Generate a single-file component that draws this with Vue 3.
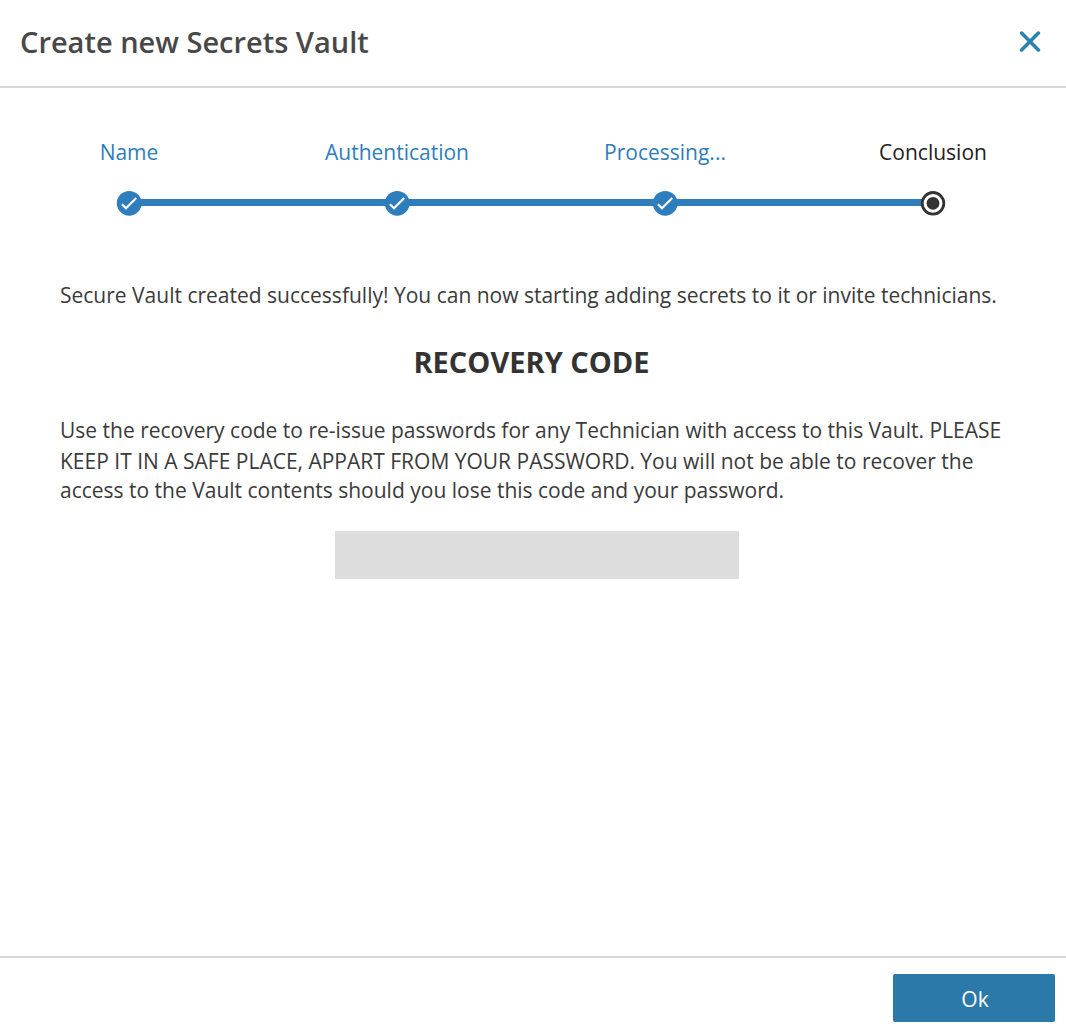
<script setup>
const steps = [
  { label: 'Name', done: true },
  { label: 'Authentication', done: true },
  { label: 'Processing...', done: true },
  { label: 'Conclusion', done: false }
]
</script>

<template>
  <div class="dialog">
    <header class="header">
      <h1>Create new Secrets Vault</h1>
      <svg class="close" width="22" height="22" viewBox="0 0 22 22"><path d="M2.6 2.1 L19.4 18.9 M19.4 2.1 L2.6 18.9" /></svg>
    </header>
    <main class="body">
      <div class="stepper">
        <div v-for="step in steps" :key="step.label" class="step" :class="{ current: !step.done }">
          <span class="label">{{ step.label }}</span>
          <svg v-if="step.done" class="dot" width="26" height="26" viewBox="0 0 26 26">
            <circle cx="13.2" cy="13.3" r="12.4" fill="#2e7dbd" />
            <path d="M5.9 14.2 L10 18.2 L20.2 8" fill="none" stroke="#fff" stroke-width="2.2" />
          </svg>
          <svg v-else class="dot" width="26" height="26" viewBox="0 0 26 26">
            <circle cx="13" cy="13.3" r="10.8" fill="#fff" stroke="#333" stroke-width="2.8" />
            <circle cx="13" cy="13.3" r="6.4" fill="#333" />
          </svg>
        </div>
      </div>
      <p class="success">Secure Vault created successfully! You can now starting adding secrets to it or invite technicians.</p>
      <h2>RECOVERY CODE</h2>
      <p class="info">
        <span>Use the recovery code to re-issue passwords for any Technician with access to this Vault. PLEASE</span>
        <span>KEEP IT IN A SAFE PLACE, APPART FROM YOUR PASSWORD. You will not be able to recover the</span>
        <span>access to the Vault contents should you lose this code and your password.</span>
      </p>
      <div class="code"></div>
    </main>
    <footer class="footer"><button>Ok</button></footer>
  </div>
</template>

<style>
body { margin: 0; background: #fff; }
</style>

<style scoped>
.dialog { width: 1066px; height: 1036px; display: flex; flex-direction: column; box-sizing: border-box; background: #fff; color: #3a3a3a; font-family: "Open Sans", sans-serif; overflow: hidden; }
.header { height: 88px; box-sizing: border-box; border-bottom: 2px solid #d8d8d8; display: flex; justify-content: space-between; align-items: center; padding: 0 25px 3px 20px; }
h1 { margin: 0; font-size: 29px; font-weight: 600; color: #484848; white-space: nowrap; }
.close { fill: none; stroke: #2a82b2; stroke-width: 3.6; stroke-linecap: round; }
.body { flex: 1; padding: 0 60px; }
.stepper { display: grid; grid-template-columns: repeat(4, 268px); margin: 47px -65px 0; height: 80px; }
.step { position: relative; display: flex; flex-direction: column; align-items: center; color: #2e7dbd; }
.label { font-size: 21px; line-height: 34px; height: 55px; white-space: nowrap; }
.current { color: #222; }
.dot { position: relative; z-index: 1; display: block; }
.step:not(:last-child)::after { content: ""; position: absolute; left: 134px; top: 64px; width: 268px; height: 7px; background: #2e7dbd; }
p { margin: 0; font-size: 21px; white-space: nowrap; }
.success { margin-top: 65px; line-height: 30px; }
h2 { margin: 33px 3px 0 0; text-align: center; font-size: 29px; line-height: 38px; font-weight: 700; color: #333; }
.info { margin-top: 34px; line-height: 30px; }
.info span { display: block; }
.info span:nth-child(2) { line-height: 32px; }
.info span:last-child { line-height: 26px; }
.code { width: 404px; height: 48px; margin: 28px 0 0 275px; background: #ddd; }
.footer { height: 80px; box-sizing: border-box; border-top: 2px solid #d8d8d8; padding: 16px 11px 0 0; display: flex; justify-content: flex-end; }
button { width: 162px; height: 48px; border: 0; border-radius: 2px; padding: 2px 0 0 2px; background: #2a79a9; color: #fff; font: 21px "Open Sans", sans-serif; }
</style>
